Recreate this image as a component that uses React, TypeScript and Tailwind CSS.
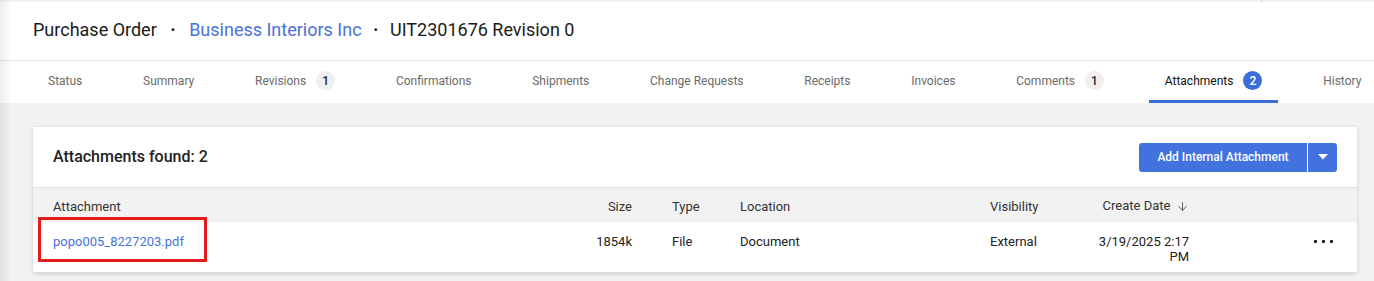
import React from 'react';
import { ArrowDown } from 'lucide-react';

type Tab = { label: string; count?: number; active?: boolean };

const TABS: Tab[] = [
  { label: 'Status' },
  { label: 'Summary' },
  { label: 'Revisions', count: 1 },
  { label: 'Confirmations' },
  { label: 'Shipments' },
  { label: 'Change Requests' },
  { label: 'Receipts' },
  { label: 'Invoices' },
  { label: 'Comments', count: 1 },
  { label: 'Attachments', count: 2, active: true },
  { label: 'History' },
];

const TabItem: React.FC<{ tab: Tab }> = ({ tab }) => (
  <div
    className={`flex items-center gap-[10px] px-4 h-full border-b-[3px] shrink-0 ${
      tab.active ? 'border-[#3b6dd9] text-[#111]' : 'border-transparent text-[#6b6b6b]'
    }`}
  >
    <span className="pt-[1px]">{tab.label}</span>
    {tab.count !== undefined && (
      <span
        className={`w-[19px] h-[19px] rounded-full flex items-center justify-center text-[12px] font-medium ${
          tab.active ? 'bg-[#3b6dd9] text-white' : 'bg-[#efefef] text-[#222]'
        }`}
      >
        {tab.count}
      </span>
    )}
  </div>
);

const App: React.FC = () => {
  return (
    <div className="relative w-[1374px] h-[281px] overflow-hidden bg-[#f2f2f2] font-['Roboto',sans-serif]">
      {/* left edge shadow */}
      <div className="absolute left-0 top-0 bottom-0 w-[12px] bg-gradient-to-r from-black/[0.07] to-transparent z-10 pointer-events-none"></div>

      {/* top strip */}
      <div className="h-[2px] flex">
        <div className="w-[1261px]"></div>
        <div className="w-px bg-[#cfcfcf]"></div>
      </div>

      {/* title bar */}
      <div className="h-[59px] bg-white border-b border-[#e6e6e6] flex items-center pl-[33px] pb-[3px] text-[18px] text-[#1a1a1a]">
        <span>Purchase Order</span>
        <span className="mx-[14px] text-[13px]">•</span>
        <span className="text-[#4a72d9]">Business Interiors Inc</span>
        <span className="mx-[12px] text-[13px]">•</span>
        <span>UIT2301676 Revision 0</span>
      </div>

      {/* tabs */}
      <div className="h-[42px] bg-white flex items-stretch pl-[32px] gap-[28.75px] text-[12px]">
        {TABS.map((t) => (
          <TabItem key={t.label} tab={t} />
        ))}
      </div>

      {/* card */}
      <div className="mt-[24px] ml-[33px] w-[1324px] bg-white shadow-[0_1px_4px_rgba(0,0,0,0.16)]">
        <div className="h-[60px] flex items-center justify-between px-5">
          <h2 className="text-[16px] font-medium text-[#222]">Attachments found: 2</h2>
          <div className="flex h-[29px] rounded-[3px] overflow-hidden text-white text-[12px] font-medium">
            <button className="w-[168px] bg-[#4272de] flex items-center justify-center">Add Internal Attachment</button>
            <div className="w-px bg-white/80"></div>
            <button className="w-[29px] bg-[#4272de] flex items-center justify-center">
              <svg width="10" height="6" viewBox="0 0 10 6">
                <path d="M0 0 L10 0 L5 5.5 Z" fill="white" />
              </svg>
            </button>
          </div>
        </div>

        <div className="grid grid-cols-[529px_50px_108px_250px_107px_92px_1fr] px-5 h-[35px] items-center bg-[#f2f2f2] border-t border-[#e0e0e0] text-[13px] text-[#333]">
          <div className="pt-[3px]">Attachment</div>
          <div className="text-right pt-[3px]">Size</div>
          <div className="pl-[40px] pt-[3px]">Type</div>
          <div className="pt-[3px]">Location</div>
          <div className="pt-[3px]">Visibility</div>
          <div className="flex items-center justify-center gap-[6px] pt-[2px] pl-[4px] -mr-[2px]">
            <span>Create Date</span>
            <ArrowDown size={13} strokeWidth={1.6} className="text-[#444]" />
          </div>
          <div></div>
        </div>

        <div className="relative grid grid-cols-[529px_50px_108px_250px_107px_92px_1fr] px-5 h-[51px] items-start border-b border-[#e0e0e0] text-[13px] text-[#222] leading-[15px] pt-[12px]">
          <div className="absolute left-[5px] -top-[5px] w-[169px] h-[45px] border-[3px] border-[#e31b1b]"></div>
          <div className="text-[#4a72d9]">popo005_8227203.pdf</div>
          <div className="text-right">1854k</div>
          <div className="pl-[40px]">File</div>
          <div>Document</div>
          <div>External</div>
          <div className="text-right">3/19/2025 2:17 PM</div>
          <div className="flex justify-end gap-[5px] pr-[4px] pt-[6px]">
            <span className="w-[3px] h-[3px] bg-[#111] rounded-[1px]"></span>
            <span className="w-[3px] h-[3px] bg-[#111] rounded-[1px]"></span>
            <span className="w-[3px] h-[3px] bg-[#111] rounded-[1px]"></span>
          </div>
        </div>
      </div>
    </div>
  );
};

export default App;
